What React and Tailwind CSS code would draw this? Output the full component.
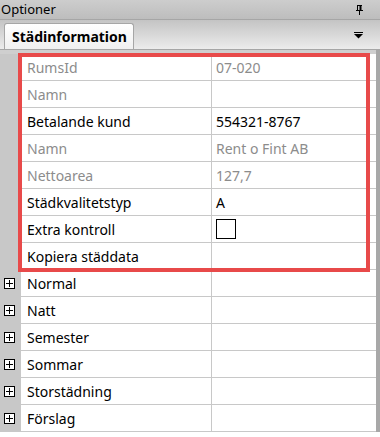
import React from 'react'

const rows = [
  { label: 'RumsId', value: '07-020', dim: true },
  { label: 'Namn', value: '', dim: true },
  { label: 'Betalande kund', value: '554321-8767' },
  { label: 'Namn', value: 'Rent o Fint AB', dim: true },
  { label: 'Nettoarea', value: '127,7', dim: true },
  { label: 'Städkvalitetstyp', value: 'A' },
  { label: 'Extra kontroll', check: true },
  { label: 'Kopiera städdata', value: '' },
]

const groups = ['Normal', 'Natt', 'Semester', 'Sommar', 'Storstädning', 'Förslag']

function PlusBox() {
  return (
    <svg width="11" height="11" viewBox="0 0 11 11" className="block">
      <rect x="0.5" y="0.5" width="10" height="10" fill="white" stroke="black" />
      <path d="M2 5.5h7M5.5 2v7" stroke="black" strokeWidth="1" />
    </svg>
  )
}

function Row({ gutter, label, value, dim, check }) {
  return (
    <div className="flex h-[27px]">
      <div className="w-[21px] bg-[#c8c8c8] flex items-center pl-[4px]">{gutter}</div>
      <div className={`w-[191px] border-b border-r border-[#c8c8c8] pl-[6px] flex items-center ${dim ? 'text-[#8c8c8c]' : 'text-black'}`}>
        {label}
      </div>
      <div className={`flex-1 border-b border-[#c8c8c8] pl-[4px] flex items-center ${dim ? 'text-[#8c8c8c]' : 'text-black'}`}>
        {check ? <div className="w-[20px] h-[20px] border border-black bg-white" /> : value}
      </div>
      <div className="w-[4px] bg-[#a8a8a8]" />
    </div>
  )
}

export default function App() {
  return (
    <div className="relative w-[380px] h-[437px] overflow-hidden bg-white text-[14px]" style={{ fontFamily: '"Noto Sans", "Open Sans", sans-serif' }}>
      <div className="h-[20px] flex items-center justify-between bg-gradient-to-b from-[#cdcdcd] to-[#bdbdbd] border-b border-[#a6a6a6] pl-[1px] pr-[17px] text-[13px] text-black">
        <span>Optioner</span>
        <svg width="7" height="10" viewBox="0 0 7 10">
          <path d="M1 0.5h5M1.5 0.5v5M4.5 0.5v5M0 5.5h7M3.5 5.5V10" stroke="black" strokeWidth="1" fill="none" />
          <path d="M4.5 0.5v5" stroke="black" strokeWidth="2" />
        </svg>
      </div>
      <div className="h-[30px] flex items-end justify-between bg-gradient-to-b from-[#c4c4c4] to-[#ececec] border-b border-[#a6a6a6] pl-[4px] pr-[17px]">
        <div className="h-[26px] w-[130px] rounded-t-[3px] border border-b-0 border-[#a6a6a6] bg-gradient-to-b from-white to-[#f0f0f0] flex items-center pl-[7px] font-bold text-black">
          Städinformation
        </div>
        <svg width="9" height="7" viewBox="0 0 9 7" className="mb-[10px]">
          <path d="M0 0.5h9" stroke="black" strokeWidth="1" />
          <path d="M0 2h9L4.5 6.5z" fill="black" />
        </svg>
      </div>
      <div className="h-[4px] flex">
        <div className="flex-1 bg-[#cfcfcf]" />
        <div className="w-[4px] bg-[#a8a8a8]" />
      </div>
      {rows.map((r, i) => (
        <Row key={i} {...r} />
      ))}
      {groups.map((g) => (
        <Row key={g} label={g} gutter={<PlusBox />} />
      ))}
      <div className="absolute left-[18px] top-[53px] w-[352px] h-[219px] border-[4px] border-[#e84a4a] pointer-events-none" />
    </div>
  )
}
